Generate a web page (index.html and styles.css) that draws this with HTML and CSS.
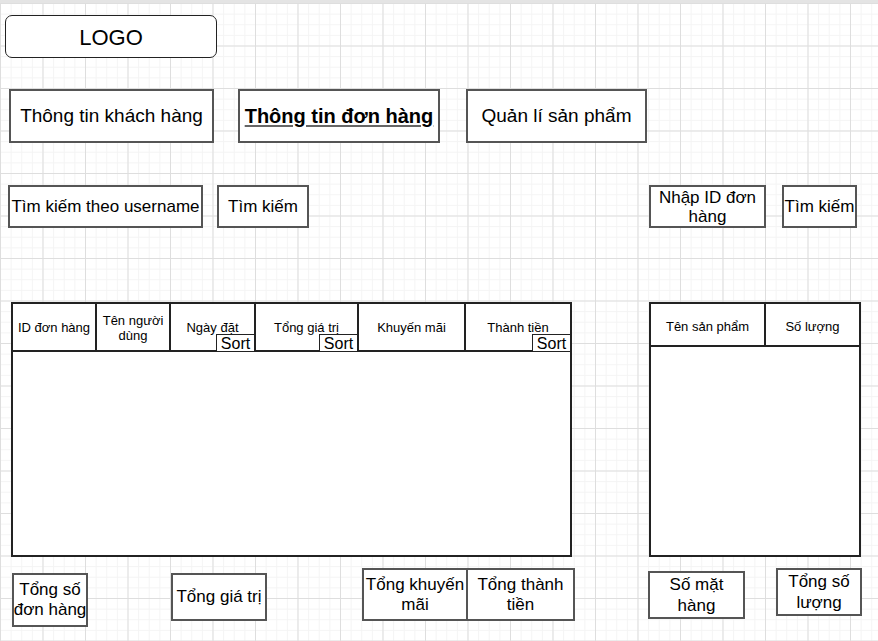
FILE: index.html
```html
<!DOCTYPE html>
<html lang="vi">
<head>
<meta charset="utf-8">
<title>Thông tin đơn hàng</title>
<link rel="stylesheet" href="styles.css">
</head>
<body>
<div class="canvas">
  <div class="topbar"></div>

  <div class="row row-logo">
    <div class="logo">LOGO</div>
  </div>

  <div class="row row-tabs">
    <div class="box tab tab-1">Thông tin khách hàng</div>
    <div class="box tab tab-2 active">Thông tin đơn hàng</div>
    <div class="box tab tab-3">Quản lí sản phẩm</div>
  </div>

  <div class="row row-search">
    <div class="box search s-user">Tìm kiếm theo username</div>
    <div class="box search s-btn1">Tìm kiếm</div>
    <div class="box search s-id">Nhập ID đơn<br>hàng</div>
    <div class="box search s-btn2">Tìm kiếm</div>
  </div>

  <div class="row row-tables">
    <div class="table orders">
      <div class="thead">
        <div class="th c1">ID đơn hàng</div>
        <div class="th c2">Tên người<br>dùng</div>
        <div class="th c3">Ngày đặt<span class="sort">Sort</span></div>
        <div class="th c4">Tổng giá trị<span class="sort">Sort</span></div>
        <div class="th c5">Khuyến mãi</div>
        <div class="th c6">Thành tiền<span class="sort">Sort</span></div>
      </div>
    </div>
    <div class="table products">
      <div class="thead">
        <div class="th p1">Tên sản phẩm</div>
        <div class="th p2">Số lượng</div>
      </div>
    </div>
  </div>

  <div class="row row-totals">
    <div class="box total t1">Tổng số<br>đơn hàng</div>
    <div class="box total t2">Tổng giá trị</div>
    <div class="pair">
      <div class="box total t3">Tổng khuyến<br>mãi</div>
      <div class="box total t4">Tổng thành<br>tiền</div>
    </div>
    <div class="box total t5">Số mặt<br>hàng</div>
    <div class="box total t6">Tổng số<br>lượng</div>
  </div>
</div>
</body>
</html>
```

FILE: styles.css
```css
* { box-sizing: border-box; }

html, body {
  margin: 0;
  padding: 0;
}

body {
  font-family: "Liberation Sans", Arial, sans-serif;
  color: #000;
  background: #fff;
}

.canvas {
  width: 878px;
  height: 641px;
  overflow: hidden;
  background-color: #fff;
  background-image:
    linear-gradient(to right, #dedede 1px, transparent 1px),
    linear-gradient(to bottom, #dedede 1px, transparent 1px),
    linear-gradient(to right, #f4f4f4 1px, transparent 1px),
    linear-gradient(to bottom, #f4f4f4 1px, transparent 1px);
  background-size: 42.5px 42.5px, 42.5px 42.5px, 10.625px 10.625px, 10.625px 10.625px;
  background-position: 0 3px, 0 3px, 0 3px, 0 3px;
}

.topbar {
  height: 3px;
  background: #e4e4e4;
}

.row {
  display: flex;
  align-items: flex-start;
}

.box {
  display: flex;
  align-items: center;
  justify-content: center;
  text-align: center;
  background: #fff;
  border: 2px solid #555;
  white-space: nowrap;
}

/* logo */
.row-logo { margin-top: 12px; }
.logo {
  margin-left: 5px;
  width: 212px;
  height: 43px;
  border: 1px solid #222;
  border-radius: 7px;
  background: #fff;
  display: flex;
  align-items: center;
  justify-content: center;
  padding-top: 2px;
  font-size: 22px;
}

/* tabs */
.row-tabs { margin-top: 31px; }
.tab {
  height: 54px;
  font-size: 19px;
}
.tab-1 { margin-left: 9px; width: 205px; }
.tab-2 { margin-left: 24px; width: 202px; }
.tab-3 { margin-left: 26px; width: 181px; }
.tab.active {
  font-weight: bold;
  font-size: 20px;
  text-decoration: underline;
  text-decoration-color: #666;
  text-decoration-thickness: 2px;
  text-underline-offset: 2px;
}

/* search */
.row-search { margin-top: 42px; }
.search {
  height: 43px;
  font-size: 17px;
  line-height: 19px;
}
.s-user { margin-left: 8px; width: 195px; }
.s-btn1 { margin-left: 14px; width: 92px; }
.s-id { margin-left: 340px; width: 117px; }
.s-btn2 { margin-left: 16px; width: 75px; }

/* tables */
.row-tables { margin-top: 74px; }
.table {
  height: 255px;
  border: 2px solid #222;
  background: #fff;
}
.orders { margin-left: 11px; width: 561px; }
.products { margin-left: 77px; width: 212px; }

.thead {
  display: flex;
  border-bottom: 2px solid #222;
}
.orders .thead { height: 48px; }
.products .thead { height: 43px; }

.th {
  position: relative;
  display: flex;
  align-items: center;
  justify-content: center;
  text-align: center;
  font-size: 13px;
  line-height: 15px;
  border-right: 2px solid #222;
  padding-top: 1px;
}
.products .th { padding-top: 3px; }
.th:last-child { border-right: none; flex: 1; }

.c1 { width: 84px; }
.c2 { width: 74px; }
.c3 { width: 85px; }
.c4 { width: 103px; }
.c5 { width: 107px; }
.p1 { width: 115px; }

.sort {
  position: absolute;
  right: -1px;
  bottom: -1px;
  width: 39px;
  height: 17px;
  border: 1px solid #222;
  border-bottom: none;
  background: #fff;
  font-size: 16px;
  line-height: 17px;
  text-align: center;
}

/* totals */
.row-totals { margin-top: 11px; }
.total {
  font-size: 17px;
  line-height: 20px;
}
.t1 { margin-left: 12px; margin-top: 5px; width: 76px; height: 54px; }
.t2 { margin-left: 83px; margin-top: 5px; width: 96px; height: 48px; }
.pair { display: flex; margin-left: 95px; }
.t3 { width: 106px; height: 53px; }
.t4 { width: 107px; height: 53px; border-left: none; }
.t5 { margin-left: 73px; margin-top: 3px; width: 97px; height: 48px; line-height: 21px; }
.t6 { margin-left: 31px; width: 86px; height: 48px; line-height: 21px; }
```
